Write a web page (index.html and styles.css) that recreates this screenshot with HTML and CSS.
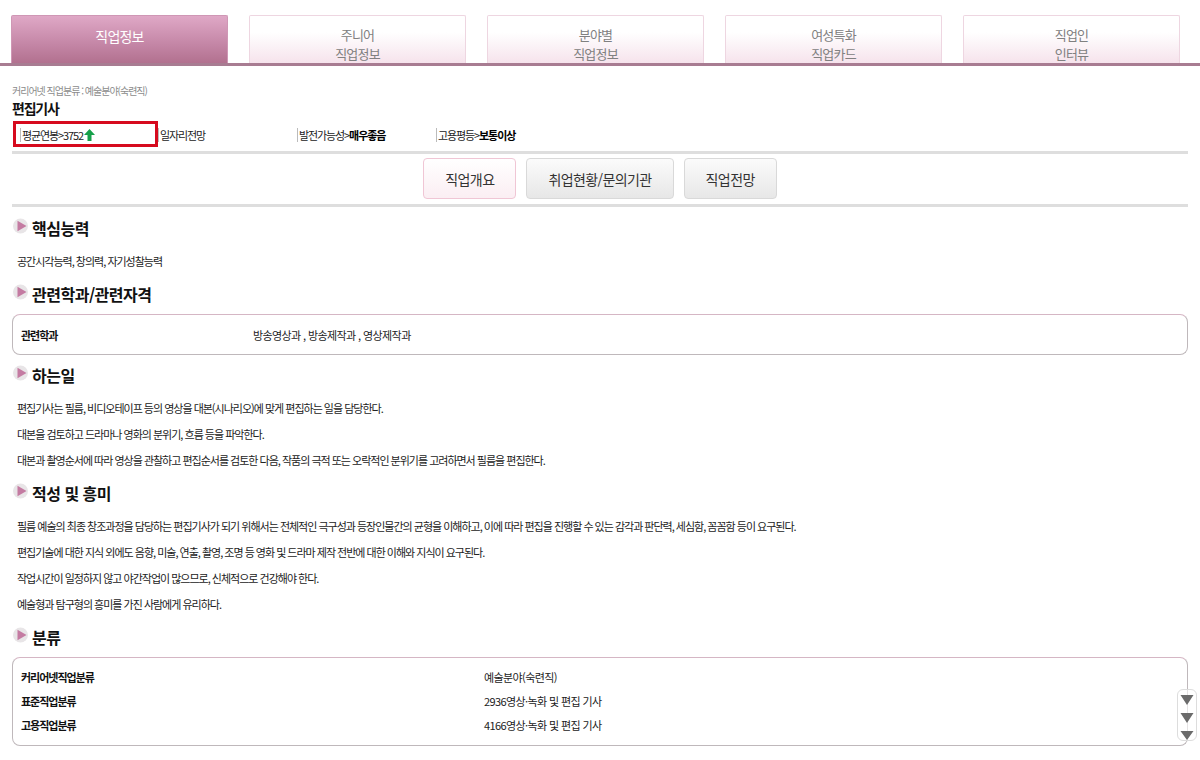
FILE: index.html
```html
<!DOCTYPE html>
<html lang="ko">
<head>
  <title>편집기사 - 직업정보</title>
  <meta charset="utf-8"/>
  <link rel="stylesheet" href="styles.css">
</head>
<body>

  <div class="tabs">
    <a class="tab on">직업정보</a>
    <a class="tab">주니어<br>직업정보</a>
    <a class="tab">분야별<br>직업정보</a>
    <a class="tab">여성특화<br>직업카드</a>
    <a class="tab">직업인<br>인터뷰</a>
  </div>

  <div class="container">
    <div class="crumb">커리어넷 직업분류 : 예술분야(숙련직)</div>
    <h1 class="job-title">편집기사</h1>

    <div class="stats">
      <div class="stat mark"><span>평균연봉&gt;3752</span>
        <svg class="up" width="11" height="12" viewBox="0 0 11 12"><path d="M5.5 0 L11 6 L7.5 6 L7.5 12 L3.5 12 L3.5 6 L0 6 Z" fill="#16a04a"/></svg>
      </div>
      <div class="stat"><span>일자리전망</span></div>
      <div class="stat"><span>발전가능성&gt;<b>매우좋음</b></span></div>
      <div class="stat"><span>고용평등&gt;<b>보통이상</b></span></div>
    </div>

    <div class="menu">
      <button type="button" class="btn on">직업개요</button>
      <button type="button" class="btn">취업현황/문의기관</button>
      <button type="button" class="btn">직업전망</button>
    </div>

    <div class="section first">
      <h2><svg class="dot" width="16" height="16" viewBox="0 0 16 16"><circle cx="7.5" cy="8" r="7.5" fill="#e8e5e7"/><path d="M4.5 2.8 L13.5 8 L4.5 13.2 Z" fill="#c47ba2"/></svg>핵심능력</h2>
      <p>공간시각능력, 창의력, 자기성찰능력</p>
    </div>

    <div class="section">
      <h2><svg class="dot" width="16" height="16" viewBox="0 0 16 16"><circle cx="7.5" cy="8" r="7.5" fill="#e8e5e7"/><path d="M4.5 2.8 L13.5 8 L4.5 13.2 Z" fill="#c47ba2"/></svg>관련학과/관련자격</h2>
      <div class="box">
        <div class="row"><b class="key">관련학과</b><span class="val">방송영상과 , 방송제작과 , 영상제작과</span></div>
      </div>
    </div>

    <div class="section">
      <h2><svg class="dot" width="16" height="16" viewBox="0 0 16 16"><circle cx="7.5" cy="8" r="7.5" fill="#e8e5e7"/><path d="M4.5 2.8 L13.5 8 L4.5 13.2 Z" fill="#c47ba2"/></svg>하는일</h2>
      <p>편집기사는 필름, 비디오테이프 등의 영상을 대본(시나리오)에 맞게 편집하는 일을 담당한다.</p>
      <p>대본을 검토하고 드라마나 영화의 분위기, 흐름 등을 파악한다.</p>
      <p>대본과 촬영순서에 따라 영상을 관찰하고 편집순서를 검토한 다음, 작품의 극적 또는 오락적인 분위기를 고려하면서 필름을 편집한다.</p>
    </div>

    <div class="section">
      <h2><svg class="dot" width="16" height="16" viewBox="0 0 16 16"><circle cx="7.5" cy="8" r="7.5" fill="#e8e5e7"/><path d="M4.5 2.8 L13.5 8 L4.5 13.2 Z" fill="#c47ba2"/></svg>적성 및 흥미</h2>
      <p>필름 예술의 최종 창조과정을 담당하는 편집기사가 되기 위해서는 전체적인 극구성과 등장인물간의 균형을 이해하고, 이에 따라 편집을 진행할 수 있는 감각과 판단력, 세심함, 꼼꼼함 등이 요구된다.</p>
      <p>편집기술에 대한 지식 외에도 음향, 미술, 연출, 촬영, 조명 등 영화 및 드라마 제작 전반에 대한 이해와 지식이 요구된다.</p>
      <p>작업시간이 일정하지 않고 야간작업이 많으므로, 신체적으로 건강해야 한다.</p>
      <p>예술형과 탐구형의 흥미를 가진 사람에게 유리하다.</p>
    </div>

    <div class="section">
      <h2><svg class="dot" width="16" height="16" viewBox="0 0 16 16"><circle cx="7.5" cy="8" r="7.5" fill="#e8e5e7"/><path d="M4.5 2.8 L13.5 8 L4.5 13.2 Z" fill="#c47ba2"/></svg>분류</h2>
      <div class="box wide">
        <div class="row"><b class="key">커리어넷직업분류</b><span class="val">예술분야(숙련직)</span></div>
        <div class="row"><b class="key">표준직업분류</b><span class="val">2936영상·녹화 및 편집 기사</span></div>
        <div class="row"><b class="key">고용직업분류</b><span class="val">4166영상·녹화 및 편집 기사</span></div>
        <div class="more">
          <svg width="16" height="50" viewBox="0 0 16 50">
            <path d="M1.5 5 H14.5 L8 15 Z M1.5 23 H14.5 L8 33 Z M1.5 41 H14.5 L8 50 Z" fill="#6b6b6b"/>
          </svg>
        </div>
      </div>
    </div>
  </div>

</body>
</html>
```

FILE: styles.css
```css
body {
  margin: 0;
  background: #fff;
  color: #222;
  font-family: "Noto Sans CJK KR", "Noto Sans", sans-serif;
}

/* top tab bar */
.tabs {
  display: flex;
  gap: 21px;
  padding: 15px 18px 0 11px;
  border-bottom: 3px solid #a87c92;
}

.tab {
  flex: 0 0 217px;
  height: 48px;
  box-sizing: border-box;
  display: flex;
  align-items: flex-end;
  justify-content: center;
  padding-bottom: 0;
  text-align: center;
  font-size: 13px;
  line-height: 19px;
  letter-spacing: -0.8px;
  color: #808080;
  border: 1px solid #eed6e1;
  border-bottom: none;
  border-radius: 2px 2px 0 0;
  background: linear-gradient(#ffffff 35%, #f6e3ec);
}

.tab.on {
  align-items: center;
  color: #fff;
  font-size: 14px;
  padding: 0 0 6px;
  border-color: #cf97b5;
  background: linear-gradient(#dfa8c6, #c486a6 60%, #b2718f);
}

.container {
  margin: 0 12px;
}

.crumb {
  margin-top: 18px;
  font-size: 10px;
  line-height: 14px;
  letter-spacing: -1px;
  color: #8c8c8c;
}

.job-title {
  margin: 0;
  font-size: 14px;
  line-height: 20px;
  letter-spacing: -1.2px;
  font-weight: bold;
  color: #111;
}

/* salary / outlook strip */
.stats {
  display: flex;
  align-items: center;
  margin-top: 3px;
  padding-bottom: 4px;
  border-bottom: 3px solid #dedede;
}

.stat {
  flex: 0 0 139px;
  height: 26px;
  box-sizing: border-box;
  display: flex;
  align-items: center;
  padding-top: 2px;
  font-size: 11px;
  letter-spacing: -1.1px;
  color: #222;
}

.stat span {
  border-left: 1px solid #bbb;
  line-height: 14px;
  padding-left: 1px;
}

.stat b {
  font-weight: bold;
  color: #000;
}

.stat.mark {
  flex-basis: 145px;
  margin-left: 1px;
  padding-left: 4px;
  border: 3px solid #d60a1e;
}

.up {
  margin-left: 1px;
}

/* sub menu buttons */
.menu {
  display: flex;
  justify-content: center;
  gap: 10px;
  padding: 4px 0 5px;
  border-bottom: 3px solid #dedede;
}

.btn {
  height: 41px;
  padding: 0 21px;
  font-family: inherit;
  font-size: 14px;
  letter-spacing: -0.6px;
  color: #333;
  border: 1px solid #d9d9d9;
  border-radius: 4px;
  background: linear-gradient(#fbfbfb, #e7e7e7);
}

.btn.on {
  border-color: #f0c6d5;
  background: linear-gradient(#ffffff, #fbeef3);
}

/* content sections */
.section {
  margin-top: 9px;
}

.section.first {
  margin-top: 10px;
}

.section h2 {
  display: flex;
  align-items: center;
  margin: 0 0 9px;
  height: 22px;
  font-size: 16px;
  font-weight: bold;
  letter-spacing: -0.5px;
  color: #111;
}

.dot {
  flex: none;
  margin: 0 3px 0 1px;
  position: relative;
  top: -2px;
}

.section p {
  margin: 0;
  padding-left: 5px;
  font-size: 11px;
  line-height: 26px;
  letter-spacing: -1px;
  color: #222;
}

.box {
  position: relative;
  padding: 8px 8px 7px;
  border: 1px solid #bfb8bb;
  border-top-color: #d5b6c4;
  border-radius: 8px;
}

.box.wide {
  padding: 7px 8px 8px;
}

.row {
  display: flex;
  align-items: center;
  height: 24px;
  font-size: 11px;
}

.key {
  flex: 0 0 232px;
  font-weight: bold;
  letter-spacing: -1px;
  color: #111;
}

.val {
  letter-spacing: -0.6px;
  color: #222;
}

.wide .key {
  flex-basis: 463px;
}

/* expand handle on the right edge of the box */
.more {
  position: absolute;
  right: -10px;
  top: 31px;
  width: 20px;
  height: 52px;
  box-sizing: border-box;
  display: flex;
  justify-content: center;
  border: 1px solid #ddd;
  border-radius: 6px;
  background: rgba(255, 255, 255, 0.6);
}
```
